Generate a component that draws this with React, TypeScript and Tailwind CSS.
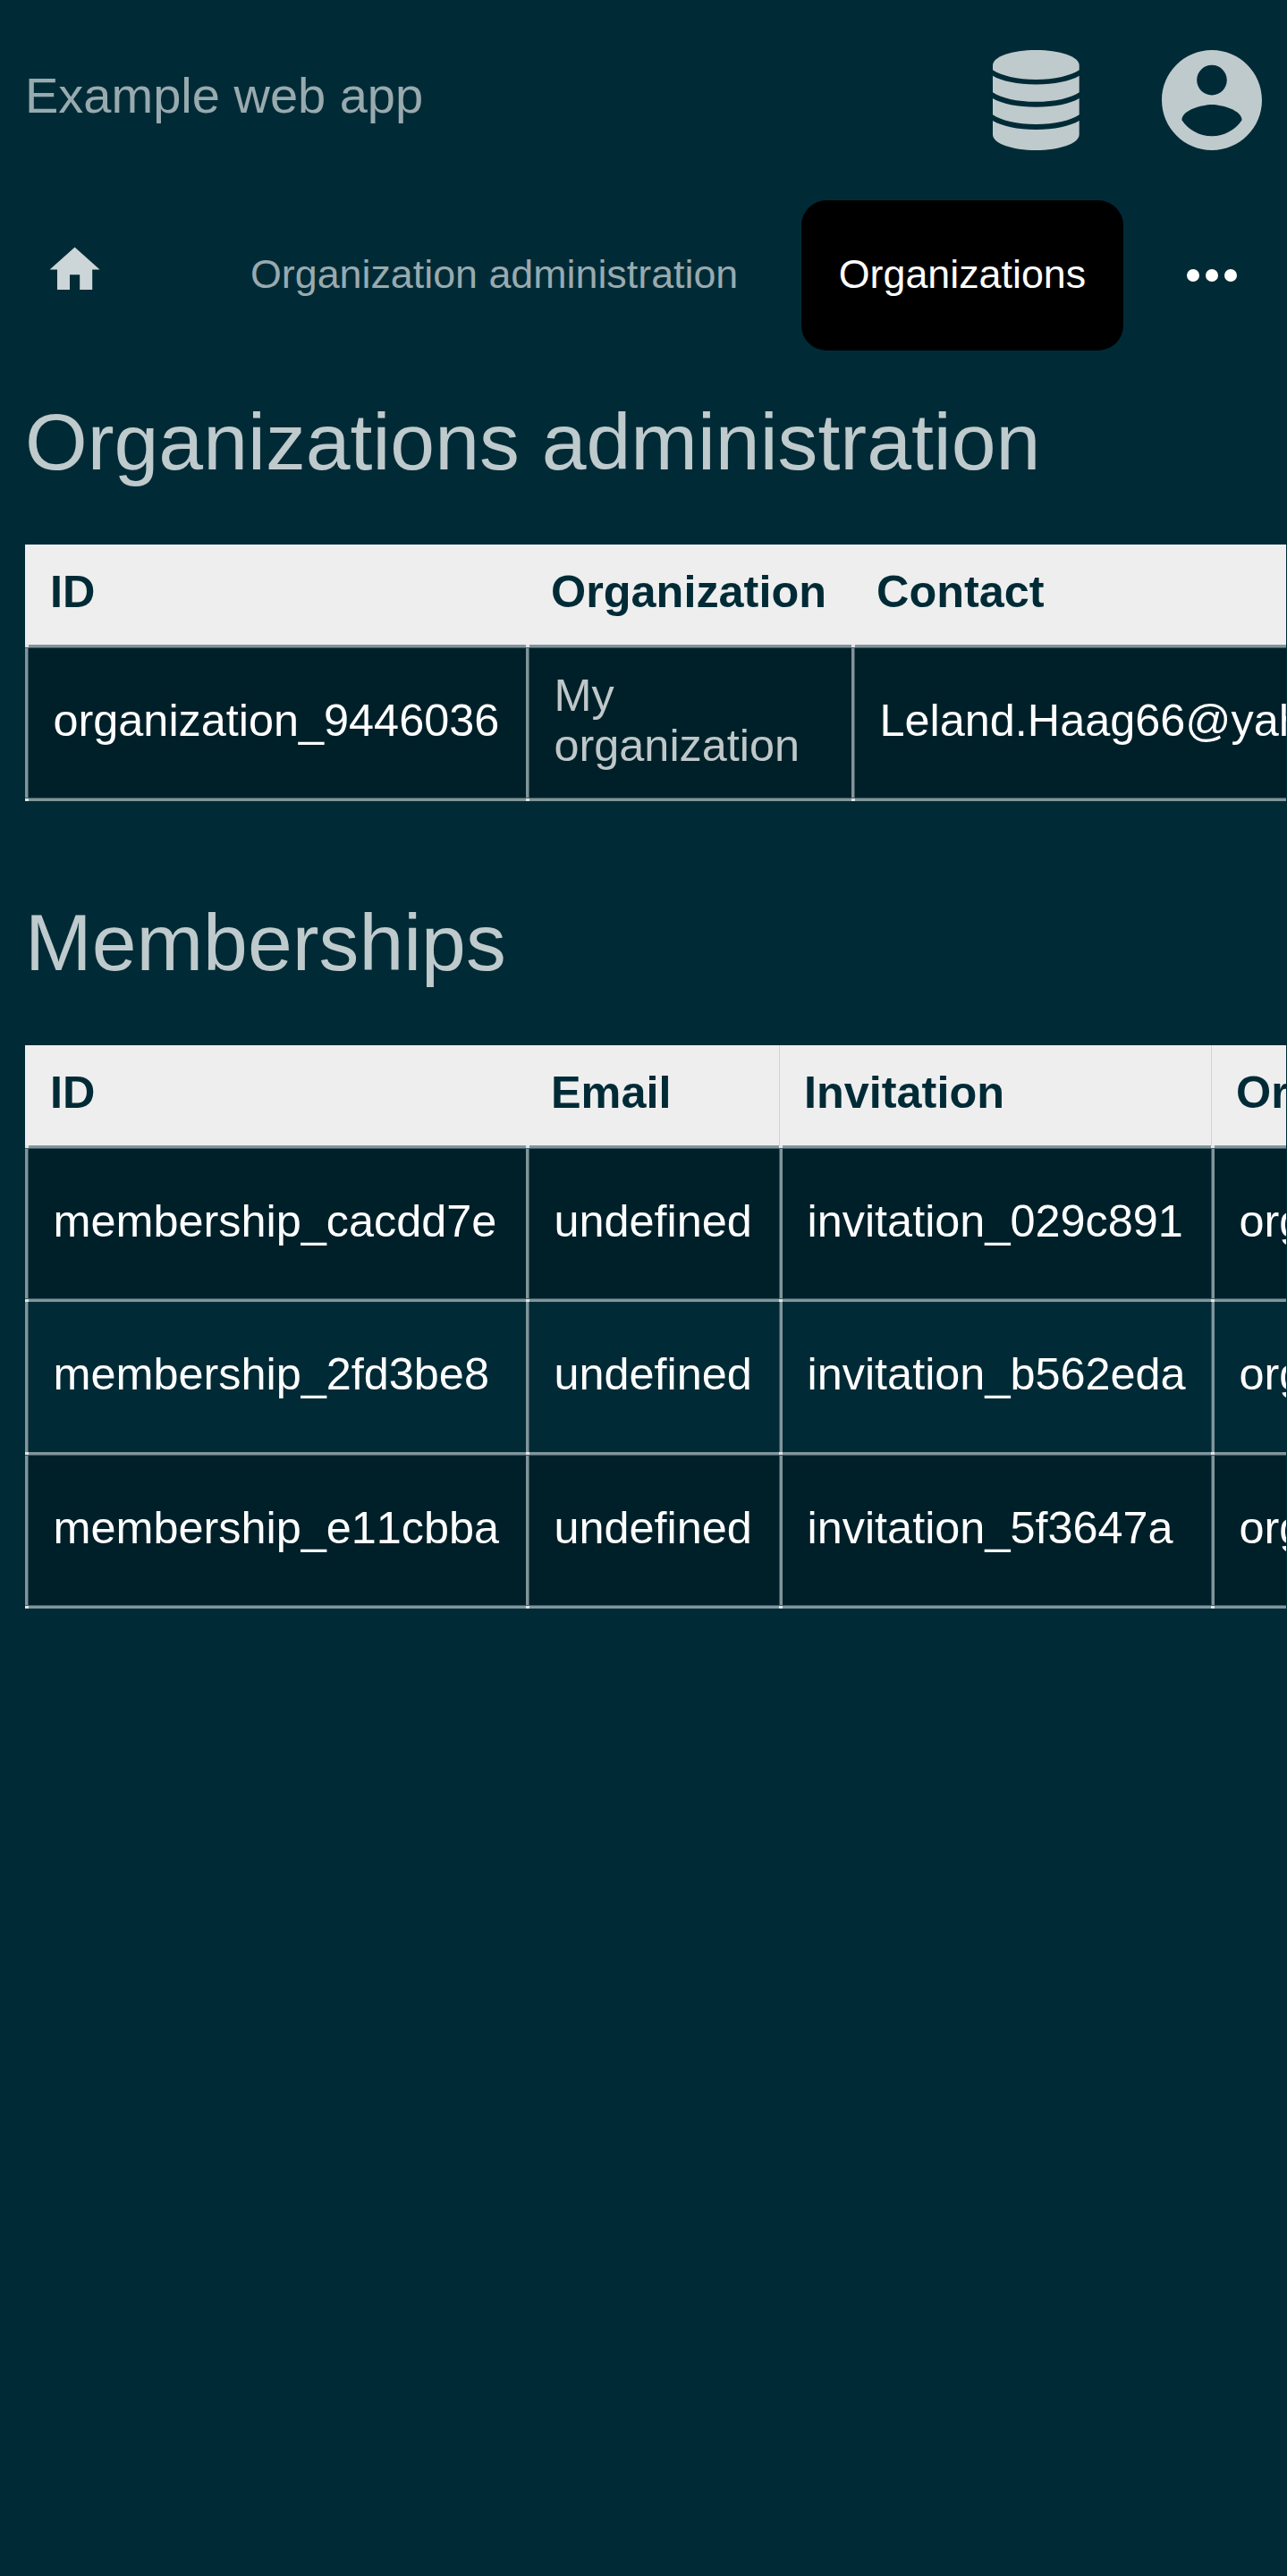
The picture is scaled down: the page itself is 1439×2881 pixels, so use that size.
type Column = {
  title: string;
  width: string;
  headClass: string;
  /** Faded pixel column of the cell's left rule. */
  ruleClass: string;
};
type Cell = { text: string; muted?: boolean };

const ruleFadeRight = "border-r border-[#3f5960]";
const ruleFadeLeft = "border-l border-[#3f5960]";

const organizationColumns: Column[] = [
  { title: "ID", width: "w-[560px]", headClass: "pl-[28px]", ruleClass: ruleFadeRight },
  { title: "Organization", width: "w-[364px]", headClass: "pl-[28px]", ruleClass: ruleFadeRight },
  { title: "Contact", width: "w-[760px]", headClass: "pl-[28px]", ruleClass: ruleFadeRight },
];

const membershipColumns: Column[] = [
  { title: "ID", width: "w-[560px]", headClass: "pl-[28px]", ruleClass: ruleFadeRight },
  { title: "Email", width: "w-[283px]", headClass: "pl-[28px]", ruleClass: ruleFadeRight },
  {
    title: "Invitation",
    width: "w-[483px]",
    headClass: "border-l border-[#d3d3d3] pl-[27px]",
    ruleClass: ruleFadeLeft,
  },
  {
    title: "Organization",
    width: "w-[560px]",
    headClass: "border-l border-[#d3d3d3] pl-[27px]",
    ruleClass: ruleFadeLeft,
  },
];

const membershipRow = (id: string, invitation: string): Cell[] => [
  { text: id },
  { text: "undefined" },
  { text: invitation },
  { text: "organization_9446036" },
];

const memberships = [
  membershipRow("membership_cacdd7e", "invitation_029c891"),
  membershipRow("membership_2fd3be8", "invitation_b562eda"),
  membershipRow("membership_e11cbba", "invitation_5f3647a"),
];

function DatabaseIcon() {
  return (
    <svg viewBox="0 0 96.7 112" className="h-[112px] w-[96.7px]" fill="currentColor">
      <path d="M0 17C0 7 22 0 48.3 0S96.7 7 96.7 17V22.3C88 28.5 69 33 48.3 33S8.7 28.5 0 22.3Z" />
      <path d="M0 28.8C10 34.8 28 38.4 48.3 38.4S86.7 34.8 96.7 28.8V47.2C88 53.5 69 57.8 48.3 57.8S8.7 53.5 0 47.2Z" />
      <path d="M0 54C10 60 28 63.8 48.3 63.8S86.7 60 96.7 54V72.2C88 78.5 69 83 48.3 83S8.7 78.5 0 72.2Z" />
      <path d="M0 79C10 85 28 89 48.3 89S86.7 85 96.7 79V94.5C96.7 104.5 75 112 48.3 112S0 104.5 0 94.5Z" />
    </svg>
  );
}

function AccountIcon() {
  return (
    <svg viewBox="2 2 20 20" className="size-[112px]" fill="currentColor">
      <path d="M12 2C6.48 2 2 6.48 2 12s4.48 10 10 10 10-4.48 10-10S17.52 2 12 2zm0 3c1.66 0 3 1.34 3 3s-1.34 3-3 3-3-1.34-3-3 1.34-3 3-3zm0 14.2c-2.5 0-4.71-1.28-6-3.22.03-1.99 4-3.08 6-3.08 1.99 0 5.97 1.09 6 3.08-1.29 1.94-3.5 3.22-6 3.22z" />
    </svg>
  );
}

function HomeIcon() {
  return (
    <svg viewBox="0 0 24 24" className="mt-[-12px] ml-[22.4px] size-[67.2px] shrink-0 text-[#ccd5d7]" fill="currentColor">
      <path d="M10 20v-6h4v6h5v-8h3L12 3 2 12h3v8z" />
    </svg>
  );
}

function MoreIcon() {
  return (
    <svg viewBox="0 0 24 24" className="ml-[56.5px] size-[84px] shrink-0 text-white" fill="currentColor">
      <circle cx="6" cy="12" r="2" />
      <circle cx="12" cy="12" r="2" />
      <circle cx="18" cy="12" r="2" />
    </svg>
  );
}

/** Horizontal rule with a bright dot wherever it crosses a column rule. */
function Rule({ columns, fade }: { columns: Column[]; fade: "top" | "bottom" }) {
  return (
    <div
      className={`flex h-[4px] bg-[#80959b] ${
        fade === "top" ? "border-t border-[#3f5960]" : "border-b border-[#3f5960]"
      }`}
    >
      {columns.map((c) => (
        <div key={c.title} className={`shrink-0 ${c.width}`}>
          <div className="h-[3px] w-[4px] bg-[#dfe5e6]" />
        </div>
      ))}
    </div>
  );
}

function DataTable({ columns, rows }: { columns: Column[]; rows: Cell[][] }) {
  return (
    <div className="w-[1410px] overflow-hidden text-[50.4px] leading-[56px]">
      <div className="flex h-[112px] w-max bg-[#eeeeee] leading-[57px] font-bold text-[#002b36]">
        {columns.map((c) => (
          <div key={c.title} className={`shrink-0 pt-[24px] ${c.width} ${c.headClass}`}>
            {c.title}
          </div>
        ))}
      </div>
      <div className="w-max">
        {rows.map((row, r) => (
          <div key={r}>
            <Rule columns={columns} fade={r === 1 ? "top" : "bottom"} />
            <div className={`flex ${r === 1 ? "h-[168px]" : "h-[167px] bg-[#002029]"}`}>
              {row.map((cell, i) => (
                <div key={i} className={`flex shrink-0 ${columns[i].width}`}>
                  <div className={`w-[4px] shrink-0 bg-[#80959b] ${columns[i].ruleClass}`} />
                  <div
                    className={`flex items-center pb-[6px] pl-[27.5px] [font-kerning:none] ${
                      cell.muted ? "pr-[28px] text-[#bfc7c9]" : "text-white"
                    }`}
                  >
                    {cell.text}
                  </div>
                </div>
              ))}
            </div>
          </div>
        ))}
        <Rule columns={columns} fade="top" />
      </div>
    </div>
  );
}

export default function App() {
  return (
    <div className="h-[2881px] w-[1439px] overflow-hidden bg-[#002b36] pl-[28px] font-['Liberation_Sans',sans-serif]">
      <header className="flex h-[224px] items-center justify-between pr-[28px] text-[#bfcacd]">
        <span className="mt-[-11px] text-[56px] leading-[63px] text-[#99aaaf]">Example web app</span>
        <div className="flex gap-[92.3px]">
          <DatabaseIcon />
          <AccountIcon />
        </div>
      </header>
      <nav className="flex h-[168px] items-center text-[44.8px] leading-[56px] text-[#99aaaf]">
        <HomeIcon />
        <span className="mt-[-4px] ml-[162.4px] whitespace-nowrap">Organization administration</span>
        <span className="ml-[70.5px] flex h-[168px] w-[360.4px] shrink-0 items-center justify-center rounded-[28px] bg-black pb-[4px] text-white">
          Organizations
        </span>
        <MoreIcon />
      </nav>
      <main className="text-[#bfcacd]">
        <h1 className="h-[217px] pt-[51px] text-[89.6px] leading-[102px]">Organizations administration</h1>
        <DataTable
          columns={organizationColumns}
          rows={[
            [
              { text: "organization_9446036" },
              { text: "My organization", muted: true },
              { text: "Leland.Haag66@yahoo.com" },
            ],
          ]}
        />
        <h1 className="h-[273px] pt-[107px] text-[89.6px] leading-[102px]">Memberships</h1>
        <DataTable columns={membershipColumns} rows={memberships} />
      </main>
    </div>
  );
}
